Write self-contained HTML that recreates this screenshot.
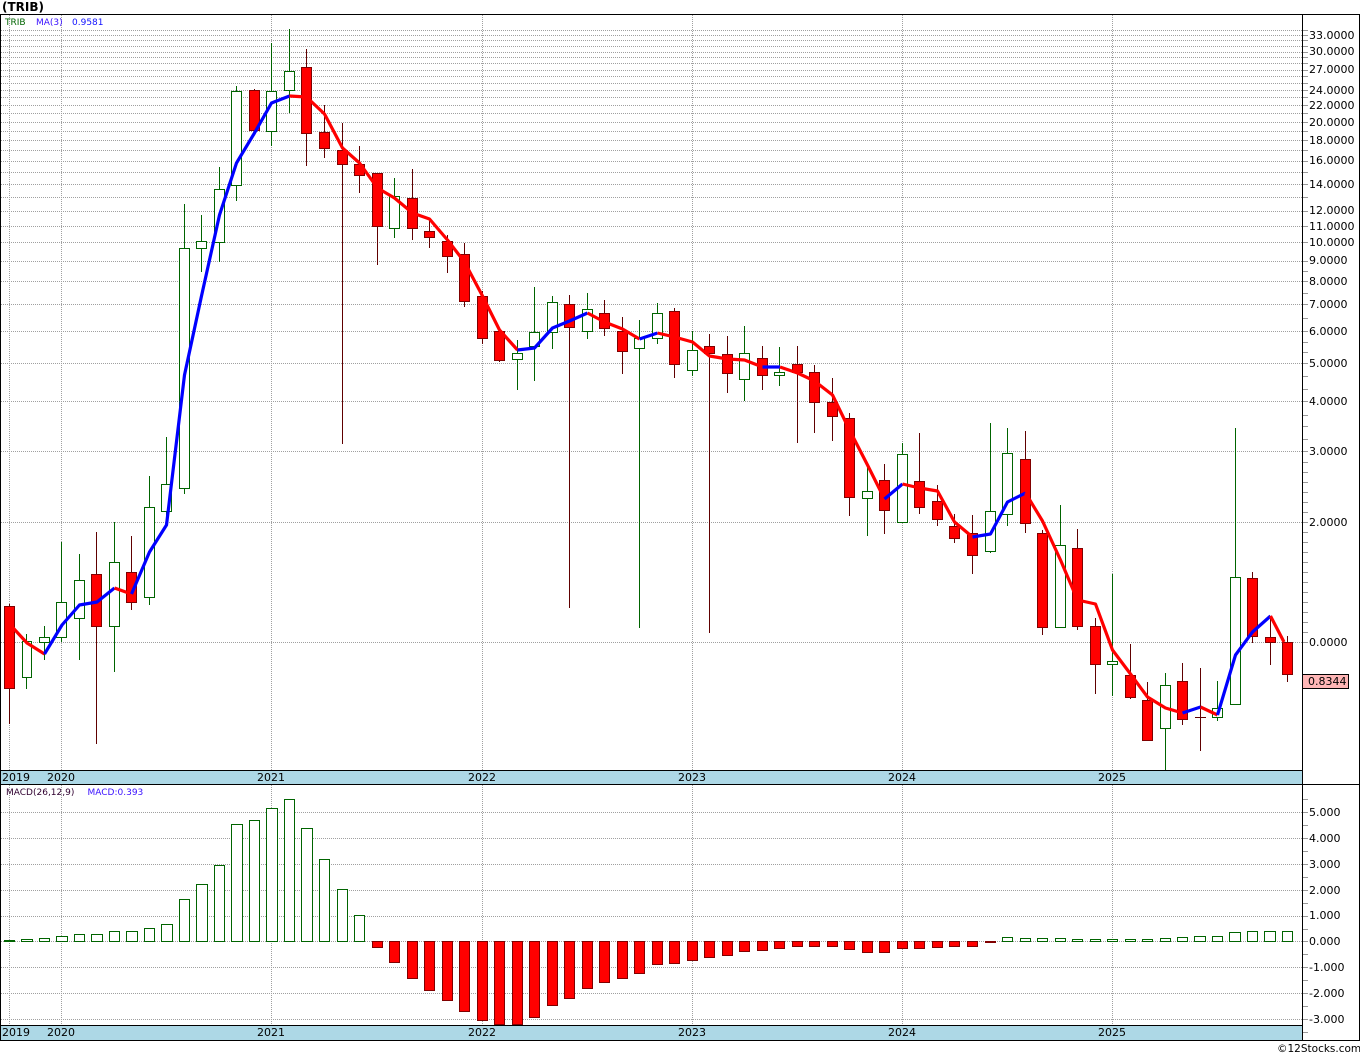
<!DOCTYPE html>
<html>
<head>
<meta charset="utf-8">
<title>TRIB</title>
<style>
html,body{margin:0;padding:0;background:#fff}
body{width:1360px;height:1056px;overflow:hidden}
svg{display:block}
text{font-family:"DejaVu Sans","Liberation Sans",sans-serif;font-size:11px;fill:#000}
.s{font-size:9px}
</style>
</head>
<body>
<svg width="1360" height="1056" viewBox="0 0 1360 1056" xmlns="http://www.w3.org/2000/svg">
<rect x="1" y="771" width="1301" height="13" fill="#add8e6"/>
<rect x="1" y="1026" width="1301" height="14" fill="#add8e6"/>
<g fill="none" shape-rendering="crispEdges">
<path stroke="#a0a0a0" stroke-dasharray="1 1" d="M1 30.5H1302M1 35.5H1302M1 40.5H1302M1 46.5H1302M1 52.5H1302M1 57.5H1302M1 63.5H1302M1 70.5H1302M1 76.5H1302M1 83.5H1302M1 90.5H1302M1 97.5H1302M1 105.5H1302M1 113.5H1302M1 122.5H1302M1 131.5H1302M1 140.5H1302M1 150.5H1302M1 161.5H1302M1 172.5H1302M1 184.5H1302M1 197.5H1302M1 211.5H1302M1 226.5H1302M1 242.5H1302M1 261.5H1302M1 281.5H1302M1 304.5H1302M1 331.5H1302M1 363.5H1302M1 401.5H1302M1 451.5H1302M1 522.5H1302M1 642.5H1302M1 812.5H1302M1 838.5H1302M1 864.5H1302M1 890.5H1302M1 916.5H1302M1 941.5H1302M1 967.5H1302M1 993.5H1302M1 1019.5H1302"/>
<path stroke="#a0a0a0" stroke-dasharray="1 1" d="M9.5 15V770M61.5 15V770M271.5 15V770M482.5 15V770M692.5 15V770M902.5 15V770M1112.5 15V770M9.5 785V1025M61.5 785V1025M271.5 785V1025M482.5 785V1025M692.5 785V1025M902.5 785V1025M1112.5 785V1025"/>
<path stroke="#999" d="M1303 30.5h5M1303 35.5h5M1303 40.5h5M1303 46.5h5M1303 52.5h5M1303 57.5h5M1303 63.5h5M1303 70.5h5M1303 76.5h5M1303 83.5h5M1303 90.5h5M1303 97.5h5M1303 105.5h5M1303 113.5h5M1303 122.5h5M1303 131.5h5M1303 140.5h5M1303 150.5h5M1303 161.5h5M1303 172.5h5M1303 184.5h5M1303 197.5h5M1303 211.5h5M1303 226.5h5M1303 242.5h5M1303 261.5h5M1303 271.5h5M1303 281.5h5M1303 293.5h5M1303 304.5h5M1303 318.5h5M1303 331.5h5M1303 342.5h5M1303 352.5h5M1303 363.5h5M1303 376.5h5M1303 389.5h5M1303 401.5h5M1303 415.5h5M1303 426.5h5M1303 439.5h5M1303 451.5h5M1303 462.5h5M1303 472.5h5M1303 482.5h5M1303 492.5h5M1303 502.5h5M1303 512.5h5M1303 522.5h5M1303 532.5h5M1303 542.5h5M1303 552.5h5M1303 562.5h5M1303 572.5h5M1303 582.5h5M1303 592.5h5M1303 602.5h5M1303 612.5h5M1303 622.5h5M1303 632.5h5M1303 642.5h5M1303 799.5h5M1303 812.5h5M1303 825.5h5M1303 838.5h5M1303 851.5h5M1303 864.5h5M1303 877.5h5M1303 890.5h5M1303 903.5h5M1303 916.5h5M1303 929.5h5M1303 941.5h5M1303 954.5h5M1303 967.5h5M1303 980.5h5M1303 993.5h5M1303 1006.5h5M1303 1019.5h5M1303 1032.5h5"/>
<!-- green wicks -->
<path stroke="#006400" d="M26.5 634V689M44.5 626V660M61.5 542V642M79.5 554V660M114.5 522V672M149.5 476V605M166.5 437V517M184.5 204V494M201.5 215V272M219.5 167V262M236.5 86V201M271.5 43V146M289.5 29V113M394.5 178V238M517.5 340V390M534.5 287V381M552.5 296V349M587.5 293V339M639.5 320V628M657.5 303V344M692.5 331V376M744.5 326V401M779.5 347V386M867.5 465V536M902.5 443V522M990.5 423V553M1007.5 428V526M1060.5 505V627M1112.5 574V696M1165.5 673V770M1217.5 681V721M1235.5 428V704"/>
<!-- red wicks -->
<path stroke="#600000" d="M9.5 604V724M96.5 532V744M131.5 536V610M254.5 89V130M306.5 49V166M324.5 105V158M342.5 123V444M359.5 146V193M377.5 173V265M412.5 169V240M429.5 218V248M447.5 235V273M464.5 243V307M482.5 291V344M499.5 331V362M569.5 295V608M604.5 300V336M622.5 317V374M674.5 308V378M709.5 334V633M727.5 336V393M762.5 346V390M797.5 346V443M814.5 365V433M832.5 378V441M849.5 413V516M884.5 464V534M919.5 433V514M937.5 485V526M954.5 514V543M972.5 515V574M1025.5 431V533M1042.5 530V635M1077.5 529V630M1095.5 618V694M1130.5 644V699M1147.5 682V740M1182.5 663V725M1200.5 668V751M1252.5 572V643M1270.5 616V665M1287.5 636V682"/>
<!-- green bodies -->
<path stroke="#006400" fill="#fff" d="M22.5 641.5h9v36h-9zM39.5 637.5h10v5h-10zM56.5 602.5h10v35h-10zM74.5 580.5h10v38h-10zM109.5 562.5h10v64h-10zM144.5 507.5h10v90h-10zM161.5 484.5h10v27h-10zM179.5 248.5h10v240h-10zM196.5 241.5h10v7h-10zM214.5 189.5h10v53h-10zM231.5 91.5h10v94h-10zM266.5 91.5h10v40h-10zM284.5 71.5h10v19h-10zM389.5 196.5h10v32h-10zM512.5 353.5h10v6h-10zM529.5 332.5h10v14h-10zM547.5 302.5h10v30h-10zM582.5 309.5h10v22h-10zM634.5 338.5h10v10h-10zM652.5 313.5h10v25h-10zM687.5 350.5h10v20h-10zM739.5 353.5h10v26h-10zM774.5 372.5h10v3h-10zM862.5 491.5h10v7h-10zM897.5 454.5h10v68h-10zM985.5 511.5h10v40h-10zM1002.5 453.5h10v61h-10zM1055.5 545.5h10v82h-10zM1107.5 661.5h10v3h-10zM1160.5 685.5h10v43h-10zM1212.5 708.5h10v9h-10zM1230.5 577.5h10v127h-10z"/>
<!-- red bodies -->
<path stroke="#800000" fill="#f00" d="M4.5 606.5h10v82h-10zM91.5 574.5h10v52h-10zM126.5 572.5h10v30h-10zM249.5 90.5h10v40h-10zM301.5 67.5h10v66h-10zM319.5 132.5h10v16h-10zM337.5 150.5h10v14h-10zM354.5 164.5h10v11h-10zM372.5 173.5h10v53h-10zM407.5 198.5h10v30h-10zM424.5 231.5h10v6h-10zM442.5 241.5h10v15h-10zM459.5 254.5h10v47h-10zM477.5 296.5h10v42h-10zM494.5 331.5h10v29h-10zM564.5 304.5h10v23h-10zM599.5 313.5h10v15h-10zM617.5 331.5h10v20h-10zM669.5 311.5h10v53h-10zM704.5 346.5h10v7h-10zM722.5 354.5h10v19h-10zM757.5 358.5h10v17h-10zM792.5 364.5h10v8h-10zM809.5 372.5h10v30h-10zM827.5 402.5h10v14h-10zM844.5 418.5h10v79h-10zM879.5 480.5h10v30h-10zM914.5 481.5h10v26h-10zM932.5 501.5h10v18h-10zM949.5 526.5h10v12h-10zM967.5 533.5h10v22h-10zM1020.5 459.5h10v64h-10zM1037.5 533.5h10v94h-10zM1072.5 548.5h10v78h-10zM1090.5 626.5h10v38h-10zM1125.5 675.5h10v22h-10zM1142.5 700.5h10v40h-10zM1177.5 681.5h10v38h-10zM1247.5 578.5h10v58h-10zM1265.5 637.5h10v5h-10zM1282.5 642.5h10v32h-10z"/>
<path stroke="#600000" d="M1195 717.5h11"/>
<!-- MACD positive -->
<path stroke="#006400" fill="#fff" d="M4.5 940.5h10v1h-10zM21.5 939.5h11v2h-11zM39.5 938.5h10v3h-10zM56.5 936.5h11v5h-11zM74.5 934.5h10v7h-10zM91.5 934.5h11v7h-11zM109.5 931.5h10v10h-10zM126.5 931.5h11v10h-11zM144.5 928.5h10v13h-10zM161.5 924.5h11v17h-11zM179.5 899.5h10v42h-10zM196.5 884.5h11v57h-11zM214.5 865.5h10v76h-10zM231.5 824.5h11v117h-11zM249.5 820.5h10v121h-10zM266.5 808.5h11v133h-11zM284.5 799.5h10v142h-10zM301.5 828.5h11v113h-11zM319.5 859.5h10v82h-10zM337.5 889.5h10v52h-10zM354.5 915.5h10v26h-10zM1002.5 937.5h10v4h-10zM1020.5 938.5h10v3h-10zM1037.5 938.5h10v3h-10zM1055.5 938.5h10v3h-10zM1072.5 939.5h10v2h-10zM1090.5 939.5h10v2h-10zM1107.5 939.5h10v2h-10zM1125.5 939.5h10v2h-10zM1142.5 939.5h10v2h-10zM1160.5 938.5h10v3h-10zM1177.5 937.5h10v4h-10zM1194.5 936.5h11v5h-11zM1212.5 936.5h10v5h-10zM1229.5 932.5h11v9h-11zM1247.5 931.5h10v10h-10zM1264.5 931.5h11v10h-11zM1282.5 931.5h10v10h-10z"/>
<!-- MACD negative -->
<path stroke="#800000" fill="#f00" d="M372.5 941.5h10v6h-10zM389.5 941.5h10v21h-10zM407.5 941.5h10v37h-10zM424.5 941.5h10v49h-10zM442.5 941.5h10v59h-10zM459.5 941.5h10v70h-10zM477.5 941.5h10v79h-10zM494.5 941.5h10v83h-10zM512.5 941.5h10v83h-10zM529.5 941.5h10v76h-10zM547.5 941.5h10v64h-10zM564.5 941.5h10v57h-10zM582.5 941.5h10v47h-10zM599.5 941.5h10v41h-10zM617.5 941.5h10v37h-10zM634.5 941.5h10v32h-10zM652.5 941.5h10v23h-10zM669.5 941.5h10v22h-10zM687.5 941.5h10v19h-10zM704.5 941.5h10v16h-10zM722.5 941.5h10v14h-10zM739.5 941.5h10v10h-10zM757.5 941.5h10v9h-10zM774.5 941.5h10v7h-10zM792.5 941.5h10v5h-10zM809.5 941.5h10v5h-10zM827.5 941.5h10v5h-10zM844.5 941.5h10v8h-10zM862.5 941.5h10v11h-10zM879.5 941.5h10v11h-10zM897.5 941.5h10v7h-10zM914.5 941.5h10v7h-10zM932.5 941.5h10v6h-10zM949.5 941.5h10v5h-10zM967.5 941.5h10v5h-10zM985.5 941.5h10v1h-10z"/>
<!-- frame -->
<path stroke="#000" d="M0 14.5H1360M.5 14V1041M1359.5 14V1041M1302.5 14V1040M1 770.5H1302M0 784.5H1360M1 1025.5H1302M0 1040.5H1360"/>
</g>
<g fill="none" stroke-width="3.2" stroke-linejoin="round">
<polyline stroke="#f00" points="9.5,624 27,643 44.5,654"/>
<polyline stroke="#00f" points="44.5,654 62,625 79.5,605 97,602 114.5,588"/>
<polyline stroke="#f00" points="114.5,588 131.5,594"/>
<polyline stroke="#00f" points="131.5,594 149.5,552 166.5,525 184.5,375 201.5,296 219.5,215 236.5,163 254.5,133 271.5,103 289.5,96"/>
<polyline stroke="#f00" points="289.5,96 306.5,97 324.5,114 342.5,148 359.5,163 377.5,188 394.5,198 412.5,213 429.5,219 447.5,240 464.5,262 482.5,296 499.5,330 517.5,350"/>
<polyline stroke="#00f" points="517.5,350 534.5,348 552.5,328 569.5,321 587.5,313"/>
<polyline stroke="#f00" points="587.5,313 604.5,322 622.5,329 639.5,339"/>
<polyline stroke="#00f" points="639.5,339 657.5,333"/>
<polyline stroke="#f00" points="657.5,333 674.5,337 692.5,342 709.5,356 727.5,359 744.5,360 762.5,367"/>
<polyline stroke="#00f" points="762.5,367 780,367"/>
<polyline stroke="#f00" points="780,367 797.5,373 814.5,381 832.5,395 849.5,430 867.5,465 884.5,499"/>
<polyline stroke="#00f" points="884.5,499 902.5,484"/>
<polyline stroke="#f00" points="902.5,484 919.5,488 937.5,491 954.5,522 972.5,537"/>
<polyline stroke="#00f" points="972.5,537 990.5,534 1007.5,502 1025.5,493"/>
<polyline stroke="#f00" points="1025.5,493 1042.5,521 1060.5,560 1077.5,600 1095.5,604 1112.5,650 1130.5,674 1147.5,697 1165.5,708 1182.5,713"/>
<polyline stroke="#00f" points="1182.5,713 1200.5,707"/>
<polyline stroke="#f00" points="1200.5,707 1217.5,715"/>
<polyline stroke="#00f" points="1217.5,715 1235.5,655 1252.5,632 1270.5,616"/>
<polyline stroke="#f00" points="1270.5,616 1284,642"/>
</g>
<rect x="1302.5" y="674.5" width="46" height="14" fill="#ffb6b6" stroke="#000" shape-rendering="crispEdges"/>
<text x="2" y="11" style="font-size:12px;font-weight:bold">(TRIB)</text>
<text class="s" x="5" y="25" style="fill:#006400">TRIB</text>
<text class="s" x="36" y="25" style="fill:#3a10ff">MA(3)</text>
<text class="s" x="72" y="25" style="fill:#1010ff">0.9581</text>
<text class="s" x="6" y="795" style="fill:#300030">MACD(26,12,9)</text>
<text class="s" x="87.5" y="795" style="fill:#3a10ff">MACD:0.393</text>
<g>
<text x="1309" y="39">33.0000</text>
<text x="1309" y="55">30.0000</text>
<text x="1309" y="73">27.0000</text>
<text x="1309" y="94">24.0000</text>
<text x="1309" y="109">22.0000</text>
<text x="1309" y="126">20.0000</text>
<text x="1309" y="144">18.0000</text>
<text x="1309" y="164">16.0000</text>
<text x="1309" y="188">14.0000</text>
<text x="1309" y="214">12.0000</text>
<text x="1309" y="230">11.0000</text>
<text x="1309" y="246">10.0000</text>
<text x="1309" y="264">9.0000</text>
<text x="1309" y="285">8.0000</text>
<text x="1309" y="308">7.0000</text>
<text x="1309" y="335">6.0000</text>
<text x="1309" y="367">5.0000</text>
<text x="1309" y="405">4.0000</text>
<text x="1309" y="455">3.0000</text>
<text x="1309" y="526">2.0000</text>
<text x="1309" y="646">0.0000</text>
<text x="1308" y="685">0.8344</text>
<text x="1309" y="816">5.000</text>
<text x="1309" y="842">4.000</text>
<text x="1309" y="868">3.000</text>
<text x="1309" y="894">2.000</text>
<text x="1309" y="919">1.000</text>
<text x="1309" y="945">0.000</text>
<text x="1309" y="971">-1.000</text>
<text x="1309" y="997">-2.000</text>
<text x="1309" y="1023">-3.000</text>
<text x="2" y="781">2019</text>
<text x="47" y="781">2020</text>
<text x="257" y="781">2021</text>
<text x="468" y="781">2022</text>
<text x="678" y="781">2023</text>
<text x="888" y="781">2024</text>
<text x="1098" y="781">2025</text>
<text x="2" y="1036">2019</text>
<text x="47" y="1036">2020</text>
<text x="257" y="1036">2021</text>
<text x="468" y="1036">2022</text>
<text x="678" y="1036">2023</text>
<text x="888" y="1036">2024</text>
<text x="1098" y="1036">2025</text>
<text x="1277" y="1052" style="font-size:10.5px">©12Stocks.com</text>
</g>
</svg>
</body>
</html>
